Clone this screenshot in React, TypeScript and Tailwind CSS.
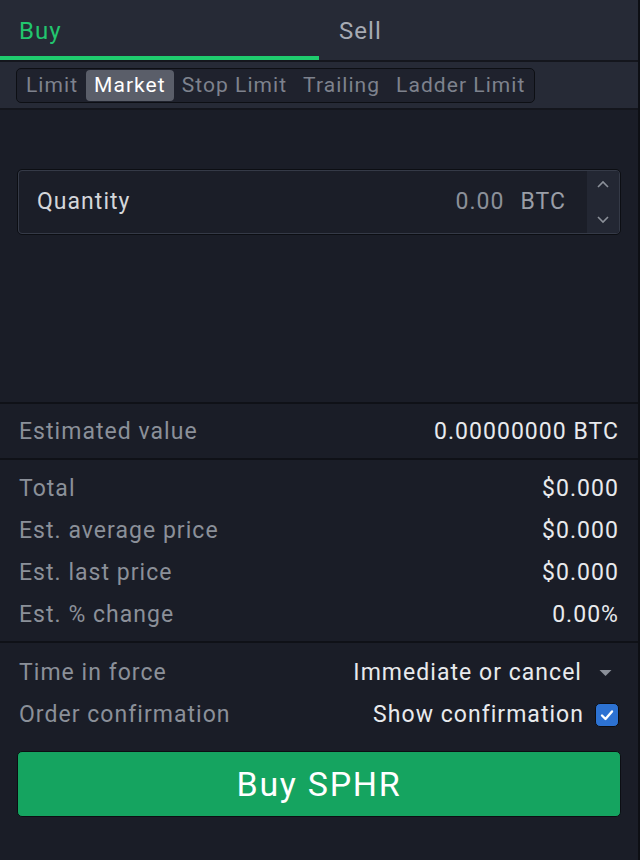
import React from "react";

const Row = ({ label, value }: { label: string; value: React.ReactNode }) => (
  <div className="flex h-[42px] items-center justify-between px-[19px]">
    <span className="text-[#8b9099]">{label}</span>
    <span className="text-[#e8eaed]">{value}</span>
  </div>
);

export default function App() {
  const tabs = ["Limit", "Market", "Stop Limit", "Trailing", "Ladder Limit"];
  return (
    <div
      className="flex h-[860px] w-[640px] flex-col overflow-hidden border-r-[2px] border-[#0d0f14] bg-[#1a1d27] text-[23px] tracking-[0.045em]"
      style={{ fontFamily: "Roboto, 'Liberation Sans', sans-serif" }}
    >
      {/* Buy / Sell tabs */}
      <div className="grid h-[60px] grid-cols-2 bg-[#262a36]">
        <div className="flex flex-col">
          <div className="flex flex-1 items-center pl-[19px] pt-[5px] text-[24px] text-[#22c56e]">Buy</div>
          <div className="h-[4px] bg-[#1fcc6e]" />
        </div>
        <div className="flex items-center pb-[4px] pl-[20px] pt-[5px] text-[24px] text-[#a6aab3]">Sell</div>
      </div>
      <div className="h-[2px] bg-[#14161d]" />
      {/* order type segmented */}
      <div className="flex h-[46px] items-start bg-[#262a36] px-[16px] pt-[6px]">
        <div className="flex h-[35px] items-center rounded-[5px] border border-[#0d0f14] bg-[#1f222d] px-[1px] text-[21px] tracking-[0.05em]">
          {tabs.map((t) => (
            <div
              key={t}
              className={
                t === "Market"
                  ? "flex h-[31px] items-center rounded-[4px] bg-[#5a5e69] px-[8px] pt-[1px] text-white"
                  : "flex h-[31px] items-center px-[8px] pt-[1px] text-[#7e828d]"
              }
            >
              {t}
            </div>
          ))}
        </div>
      </div>
      <div className="h-[2px] bg-[#14161d]" />

      {/* Quantity */}
      <div className="flex h-[292px] flex-col px-[17px] pt-[59px]">
        <div className="h-[66px] rounded-[5px] border border-[#0c0e13]">
          <div className="flex h-full items-stretch overflow-hidden rounded-[4px] border border-[#353a47] bg-[#1b1e28]">
            <div className="flex flex-1 items-center justify-between pl-[18px] pr-[21px] pt-[1px]">
              <span className="text-[#d4d6da]">Quantity</span>
              <span className="text-[#8b9099]">
                0.00<span className="ml-[16px] text-[#9a9ea7]">BTC</span>
              </span>
            </div>
            <div className="flex w-[32px] flex-col items-center justify-between bg-[#232733] py-[8px]">
              <svg width="14" height="10" viewBox="0 0 14 10">
                <path d="M2 8 L7 3 L12 8" fill="none" stroke="#8b9099" strokeWidth="1.6" />
              </svg>
              <svg width="14" height="10" viewBox="0 0 14 10">
                <path d="M2 2 L7 7 L12 2" fill="none" stroke="#8b9099" strokeWidth="1.6" />
              </svg>
            </div>
          </div>
        </div>
      </div>

      <div className="h-[2px] bg-[#0f1117]" />
      <div className="flex h-[54px] items-center justify-between px-[19px] pt-[3px]">
        <span className="text-[#8b9099]">Estimated value</span>
        <span className="text-[#e8eaed]">0.00000000 BTC</span>
      </div>
      <div className="h-[2px] bg-[#0f1117]" />

      <div className="flex flex-col pb-[5px] pt-[8px]">
        <Row label="Total" value="$0.000" />
        <Row label="Est. average price" value="$0.000" />
        <Row label="Est. last price" value="$0.000" />
        <Row label="Est. % change" value="0.00%" />
      </div>
      <div className="h-[2px] bg-[#0f1117]" />

      <div className="flex flex-col pt-[9px]">
        <Row
          label="Time in force"
          value={
            <span className="flex items-center gap-[17px]">
              Immediate or cancel
              <svg width="13" height="8" viewBox="0 0 13 8" className="mr-[7px]">
                <path d="M0.5 1 L12.5 1 L6.5 7 Z" fill="#8b9099" />
              </svg>
            </span>
          }
        />
        <Row
          label="Order confirmation"
          value={
            <span className="flex items-center gap-[11px]">
              Show confirmation
              <span className="flex h-[24px] w-[24px] items-center justify-center rounded-[5px] border border-[#0c0e13] bg-[#2d72d2]">
                <svg width="14" height="12" viewBox="0 0 14 12">
                  <path d="M2 6.5 L5.5 10 L12 2.5" fill="none" stroke="white" strokeWidth="2.4" strokeLinecap="round" strokeLinejoin="round" />
                </svg>
              </span>
            </span>
          }
        />
      </div>

      <div className="px-[17px] pt-[15px]">
        <button className="flex h-[66px] w-full items-center justify-center rounded-[5px] border border-[#0c0e13] bg-[#15a460] text-[34px] tracking-[0.05em] text-white">
          Buy SPHR
        </button>
      </div>
    </div>
  );
}
